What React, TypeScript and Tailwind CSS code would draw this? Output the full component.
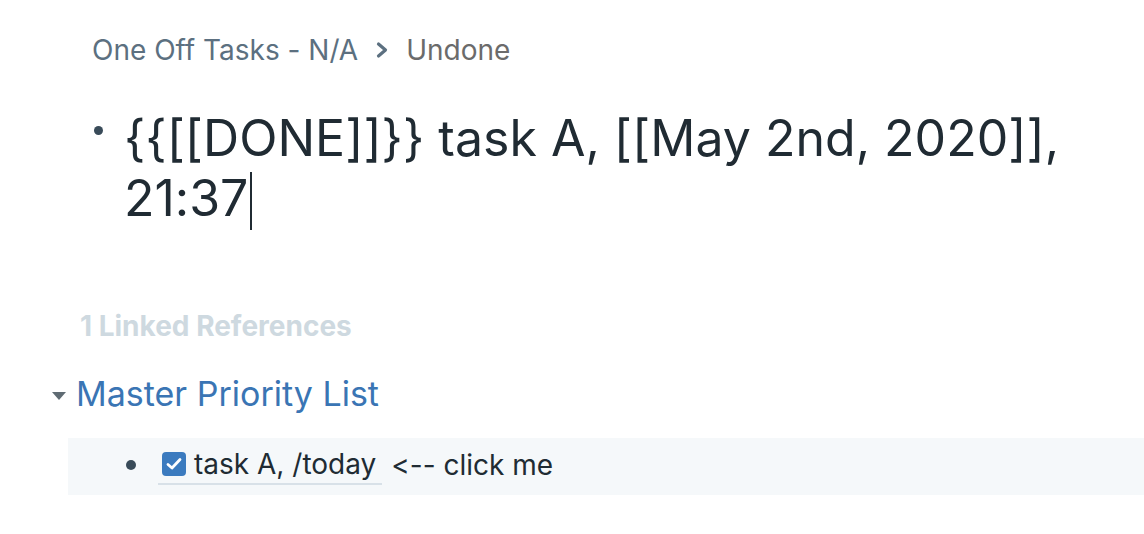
import React from 'react';

const Chevron = () => (
  <svg width="14" height="20" viewBox="0 0 14 20" className="mx-[17px]">
    <path d="M3.5 4 L10.5 10 L3.5 16" fill="none" stroke="#5C7080" strokeWidth="3.2" strokeLinecap="round" strokeLinejoin="round" />
  </svg>
);

const App = () => {
  return (
    <div className="w-[1144px] h-[534px] bg-white overflow-hidden text-[#202B33] font-['Inter'] [font-feature-settings:'calt'_0,'liga'_0]">
      <div className="pt-[30px] pl-[92px] flex items-center text-[28px] leading-[40px]">
        <span className="text-[#5C7080]">One Off Tasks - N/A</span>
        <Chevron />
        <span className="text-[#6b6b6b]">Undone</span>
      </div>

      <div className="flex pl-[92px] mt-[38px]">
        <div className="w-[35px] shrink-0 flex justify-start pt-[18px] pl-[2px]">
          <span className="w-[9px] h-[9px] rounded-full bg-[#394B59]" />
        </div>
        <h1 className="text-[50px] leading-[60px] font-normal w-[1000px] -ml-[3px]">
          {'{{[[DONE]]}} task A, [[May 2nd, 2020]],'} 21:37
          <span className="inline-block w-[2px] h-[58px] bg-[#202B33] align-[-14px] ml-[2px]" />
        </h1>
      </div>

      <div className="pl-[80px] mt-[76px] text-[28px] leading-[40px] font-bold text-[#CED9E0]">
        1 Linked References
      </div>

      <div className="flex items-center pl-[52px] mt-[26px] h-[44px]">
        <svg width="14" height="10" viewBox="0 0 14 10" className="mr-[10px] mt-[4px]">
          <path d="M0 1 L14 1 L7 9 Z" fill="#5F6B73" />
        </svg>
        <span className="text-[34px] leading-[44px] text-[#3A75B4]">Master Priority List</span>
      </div>

      <div className="ml-[68px] mt-[22px] h-[57px] bg-[#F5F8FA] flex items-center pl-[58px]">
        <span className="w-[10px] h-[10px] rounded-full bg-[#394B59] -mt-[3px]" />
        <div className="ml-[22px] flex items-center text-[28px] leading-[38px] -mt-[3px]">
          <span className="flex items-center border-b-2 border-[#D8E1E8] pl-[4px] pr-[6px]">
            <span className="w-[24px] h-[24px] rounded-[4px] bg-[#3B7BBF] flex items-center justify-center mr-[8px]">
              <svg width="16" height="14" viewBox="0 0 16 14">
                <path d="M2 7.5 L6 11 L14 2.5" fill="none" stroke="white" strokeWidth="2.8" strokeLinecap="round" strokeLinejoin="round" />
              </svg>
            </span>
            task A, /today
          </span>
          <span className="ml-[9px]">{'<-- click me'}</span>
        </div>
      </div>
    </div>
  );
};

export default App;
